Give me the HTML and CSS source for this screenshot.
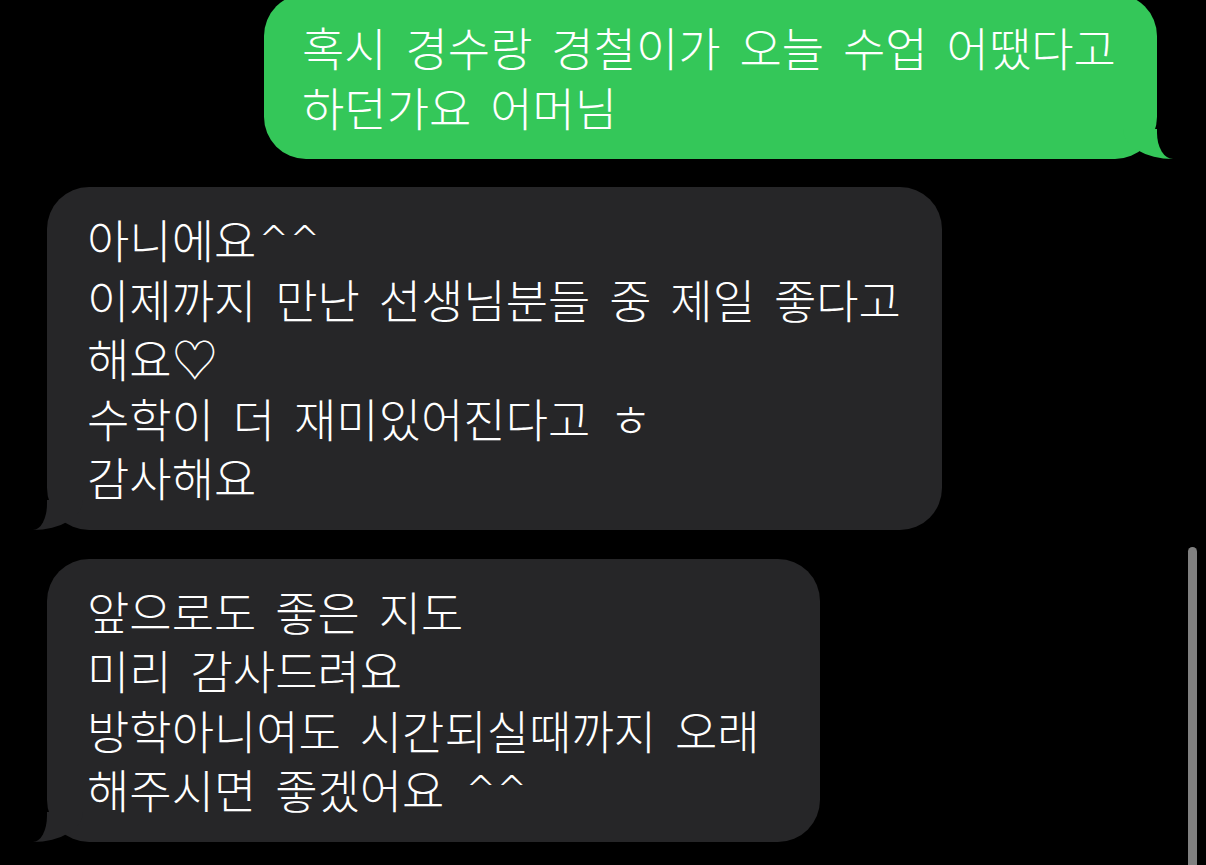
FILE: index.html
```html
<!DOCTYPE html>
<html lang="ko">
<head>
    <meta charset="UTF-8">
    <meta name="viewport" content="width=device-width, initial-scale=1.0">
    <title>메시지</title>
    <link rel="stylesheet" href="styles.css">
</head>
<body>

    <div class="chat">

        <!-- 보낸 메시지 -->
        <div class="bubble sent">
            혹시 경수랑 경철이가 오늘 수업 어땠다고<br>
            하던가요 어머님
        </div>

        <!-- 받은 메시지 -->
        <div class="bubble received first">
            아니에요<span class="caret">^^</span><br>
            이제까지 만난 선생님분들 중 제일 좋다고<br>
            해요♡<br>
            수학이 더 재미있어진다고 ㅎ<br>
            감사해요
        </div>

        <div class="bubble received second">
            앞으로도 좋은 지도<br>
            미리 감사드려요<br>
            방학아니여도 시간되실때까지 오래<br>
            해주시면 좋겠어요 <span class="caret">^^</span>
        </div>

    </div>

    <div class="scrollbar"></div>

</body>
</html>
```

FILE: styles.css
```css
body { margin: 0; background: #000; color: #fff; font-family: "Noto Sans CJK KR", "Noto Sans", sans-serif; overflow: hidden; height: 865px; }
.chat { display: flex; flex-direction: column; }
.bubble { position: relative; box-sizing: border-box; font-size: 46px; font-weight: 300; line-height: 59.5px; letter-spacing: 0; word-spacing: 6px; white-space: nowrap; border-radius: 42px; padding: 23px 38px; }
.sent { align-self: flex-end; width: 893px; margin: -6px 49px 0 0; background: #34c759; }
.received { align-self: flex-start; margin-left: 47px; background: #262628; padding: 22px 40px 23px; }
.first { width: 895px; margin-top: 28px; }
.second { width: 773px; margin-top: 29px; }
.caret { font-family: "DejaVu Sans", sans-serif; font-size: 37px; font-weight: 300; line-height: 1; vertical-align: 6px; margin-left: 2px; }

/* 말풍선 꼬리 */
.bubble::before { content: ""; position: absolute; bottom: 0; width: 50px; height: 30px; }
.bubble::after { content: ""; position: absolute; bottom: 0; width: 40px; height: 40px; background: #000; }
.sent::before { right: -16px; background: #34c759; border-bottom-left-radius: 50px 30px; }
.sent::after { right: -40px; border-bottom-left-radius: 16px 26px; }
.received::before { left: -14px; background: #262628; border-bottom-right-radius: 50px 30px; }
.received::after { left: -40px; border-bottom-right-radius: 14px 26px; }

.scrollbar { position: absolute; right: 9px; top: 547px; width: 9px; height: 330px; border-radius: 5px; background: #808080; }
```
